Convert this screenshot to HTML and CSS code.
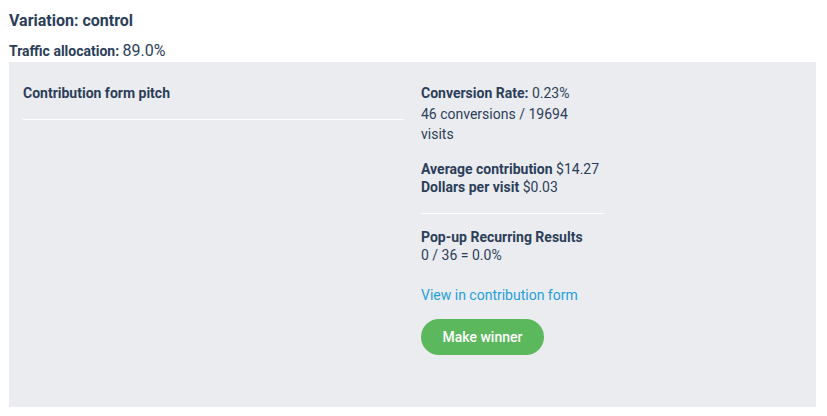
FILE: index.html
```html
<!DOCTYPE html>
<html lang="en">
  <head>
    <meta charset="UTF-8" />
    <title>Variation</title>
    <link rel="stylesheet" href="styles.css">
  </head>
  <body>
    <div class="variacao">
      <h3 class="titulo">Variation: control</h3>
      <div class="trafego"><b>Traffic allocation:</b> <span class="valor">89.0%</span></div>
      <div class="caixa">
        <div class="esquerda">
          <div class="nome">Contribution form pitch</div>
          <hr class="linha" />
        </div>
        <div class="direita">
          <p class="bloco"><b>Conversion Rate:</b> 0.23%<br />46 conversions / 19694 visits</p>
          <p class="bloco apertado"><b>Average contribution</b> $14.27<br /><b>Dollars per visit</b> $0.03</p>
          <hr class="linha" />
          <p class="bloco apertado"><b>Pop-up Recurring Results</b><br />0 / 36 = 0.0%</p>
          <a class="link" href="#">View in contribution form</a>
          <button class="vencedor">Make winner</button>
        </div>
      </div>
    </div>
  </body>
</html>
```

FILE: styles.css
```css
body {
  margin: 0;
  padding: 9px;
  font-family: Roboto, "Liberation Sans", sans-serif;
  color: #2b3e59;
  background-color: white;
}
.titulo {
  margin: 0;
  font-size: 16px;
  font-weight: bold;
  line-height: 24px;
}
.trafego {
  margin-top: 9px;
  font-size: 14px;
  line-height: 18px;
}
.trafego .valor {
  font-size: 16px;
}
.caixa {
  display: flex;
  gap: 17px;
  margin-top: 2px;
  width: 807px;
  height: 345px;
  box-sizing: border-box;
  padding: 21px 14px;
  background-color: #ebecf0;
  font-size: 14px;
}
.esquerda {
  width: 381px;
}
.nome {
  font-weight: bold;
  line-height: 20px;
}
.linha {
  margin: 16px 0 0;
  border: 0;
  border-top: 1px solid white;
}
.direita {
  width: 183px;
  display: flex;
  flex-direction: column;
  align-items: flex-start;
}
.bloco {
  max-width: 172px;
  margin: 0 0 15px;
  line-height: 20.5px;
}
.apertado {
  max-width: none;
  line-height: 18.5px;
}
.direita .linha {
  width: 100%;
  margin: 1px 0 14px;
}
.link {
  margin-top: 6px;
  color: #1ea0dc;
  text-decoration: none;
  line-height: 18px;
}
.vencedor {
  margin-top: 15px;
  width: 123px;
  height: 36px;
  border: none;
  border-radius: 18px;
  background-color: #5cb85c;
  color: white;
  font-family: Roboto, "Liberation Sans", sans-serif;
  font-size: 14px;
  font-weight: 500;
}
```
